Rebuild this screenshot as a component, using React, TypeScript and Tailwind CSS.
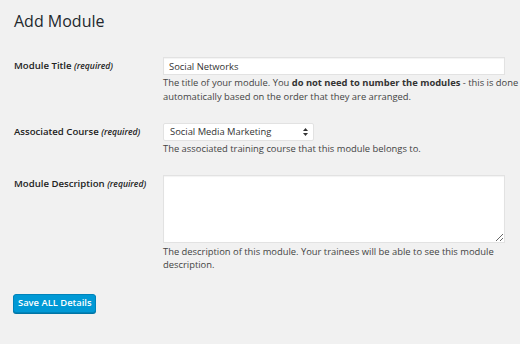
import React from "react";

function Arrows() {
  return (
    <svg width="5" height="8" viewBox="0 0 5 8" className="shrink-0">
      <path d="M2.5 0 L5 3 L0 3 Z" fill="#333" />
      <path d="M2.5 8 L5 5 L0 5 Z" fill="#333" />
    </svg>
  );
}

export default function App() {
  return (
    <div className="min-h-[344px] w-[520px] bg-[#f1f1f1] font-['Open_Sans',sans-serif] text-[#444] pl-[14px] pt-[10px]">
      <h1 className="text-[16px] leading-[22px] text-[#23282d] font-normal">Add Module</h1>

      <div className="mt-[25px] flex">
        <div className="w-[149px] h-[18px] flex items-center text-[9.6px] font-semibold text-[#222]">
          Module Title&nbsp;<span className="italic text-[8.6px] font-semibold">(required)</span>
        </div>
        <div className="w-[342px]">
          <input
            readOnly
            value="Social Networks"
            className="block w-[342px] h-[18px] bg-white border border-[#e2e2e2] shadow-[inset_0_1px_1px_rgba(0,0,0,0.05)] px-[5px] text-[9.4px] text-[#333] outline-none"
          />
          <p className="text-[9.4px] leading-[14px] mt-[1px] w-[358px]">
            The title of your module. You <b className="font-bold text-[#333]">do not need to number the modules</b> - this is done automatically based on the order that they are arranged.
          </p>
        </div>
      </div>

      <div className="mt-[19px] flex">
        <div className="w-[149px] h-[18px] flex items-center text-[9.6px] font-semibold text-[#222]">
          Associated Course&nbsp;<span className="italic text-[8.6px] font-semibold">(required)</span>
        </div>
        <div className="w-[342px]">
          <div className="w-[151px] h-[18px] bg-white border border-[#e2e2e2] rounded-[2px] flex items-center justify-between pl-[6px] pr-[5px] text-[9.4px] text-[#333]">
            <span>Social Media Marketing</span>
            <Arrows />
          </div>
          <p className="text-[9.4px] leading-[14px] mt-[1px]">
            The associated training course that this module belongs to.
          </p>
        </div>
      </div>

      <div className="mt-[19px] flex">
        <div className="w-[149px] h-[18px] flex items-center text-[9.6px] font-semibold text-[#222]">
          Module Description&nbsp;<span className="italic text-[8.6px] font-semibold">(required)</span>
        </div>
        <div className="w-[342px]">
          <textarea
            readOnly
            className="block w-[342px] h-[68px] bg-white border border-[#e2e2e2] shadow-[inset_0_1px_1px_rgba(0,0,0,0.05)] outline-none resize"
          />
          <p className="text-[9.4px] leading-[13px] mt-[2px] w-[345px]">
            The description of this module. Your trainees will be able to see this module description.
          </p>
        </div>
      </div>

      <button className="mt-[23px] -ml-[1px] h-[19px] px-[4px] rounded-[3px] bg-[#0099d5] border border-[#0083ba] text-white text-[9.4px] font-semibold shadow-[0_1px_0_#0075a5]">
        Save ALL Details
      </button>
    </div>
  );
}
